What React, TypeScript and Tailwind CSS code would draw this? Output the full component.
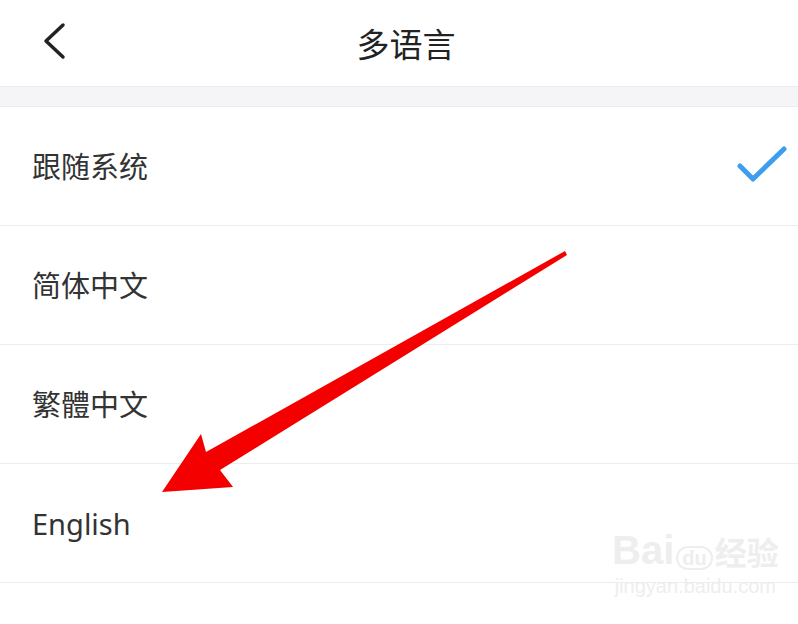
import React from "react";

const font = { fontFamily: '"Noto Sans", "Noto Sans CJK SC", sans-serif' };

function Row({ label, checked }: { label: string; checked?: boolean }) {
  return (
    <div className="flex h-[119px] items-center justify-between border-b border-[#ededed] pl-[32px] pr-[10px]">
      <span className="text-[29px] leading-none text-[#333333]" style={font}>
        {label}
      </span>
      {checked && (
        <svg width="52" height="40" viewBox="0 0 52 40">
          <polyline
            points="4,20 17,33 48,3"
            fill="none"
            stroke="#3d9ef0"
            strokeWidth="5"
            strokeLinecap="round"
            strokeLinejoin="round"
          />
        </svg>
      )}
    </div>
  );
}

export default function App() {
  return (
    <div className="relative h-[624px] w-[798px] overflow-hidden bg-white" style={font}>
      <div className="relative flex h-[86px] items-center justify-center">
        <svg className="absolute left-[40px] top-[22px]" width="28" height="38" viewBox="0 0 28 38">
          <polyline
            points="23,3 6,19 23,35"
            fill="none"
            stroke="#222222"
            strokeWidth="3.5"
            strokeLinecap="round"
            strokeLinejoin="round"
          />
        </svg>
        <span className="ml-[14px] mt-[2px] text-[33px] leading-none text-[#222222]">多语言</span>
      </div>
      <div className="h-[21px] border-y border-[#ececec] bg-[#f5f5f7]" />
      <Row label="跟随系统" checked />
      <Row label="简体中文" />
      <Row label="繁體中文" />
      <Row label="English" />

      <svg className="pointer-events-none absolute left-0 top-0" width="798" height="624" viewBox="0 0 798 624">
        <polygon
          points="565,251 567,255 220,470 233,487 162,492 201,434 206,452"
          fill="#f50000"
        />
      </svg>

      <div className="pointer-events-none absolute left-[612px] top-[530px] flex flex-col items-center text-[#eeeeee]">
        <div className="flex items-end text-[40px] font-bold leading-none" style={{ fontFamily: '"Liberation Sans", "Noto Sans CJK SC", sans-serif' }}>
          <span>Bai</span>
          <span className="mx-[2px] rounded-full border-2 border-[#eeeeee] px-[4px] text-[20px]">du</span>
          <span className="text-[32px]">经验</span>
        </div>
        <span className="mt-[6px] text-[20px] leading-none" style={{ fontFamily: '"Liberation Sans", sans-serif' }}>
          jingyan.baidu.com
        </span>
      </div>
    </div>
  );
}
